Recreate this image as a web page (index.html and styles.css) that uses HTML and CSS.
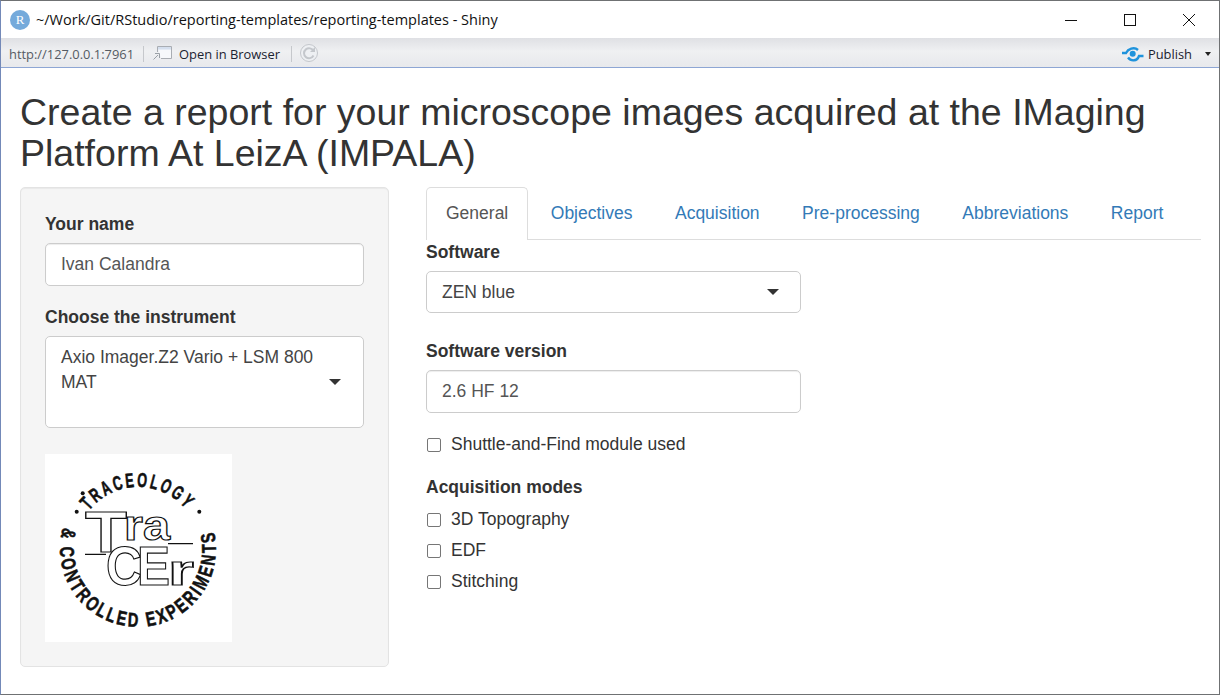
FILE: index.html
```html
<!DOCTYPE html>
<html lang="en">
<head>
<meta charset="utf-8">
<title>Shiny</title>
<link rel="stylesheet" href="styles.css">
</head>
<body>
<div class="window">
  <header class="titlebar">
    <span class="r-icon">R</span>
    <span class="title">~/Work/Git/RStudio/reporting-templates/reporting-templates - Shiny</span>
    <div class="win-controls">
      <svg class="win-btn" width="14" height="14" viewBox="0 0 14 14"><path d="M1 7.5H13" stroke="#111" stroke-width="1" fill="none"/></svg>
      <svg class="win-btn" width="14" height="14" viewBox="0 0 14 14"><rect x="1.5" y="1.5" width="11" height="11" stroke="#111" stroke-width="1" fill="none"/></svg>
      <svg class="win-btn" width="14" height="14" viewBox="0 0 14 14"><path d="M1 1L13 13M13 1L1 13" stroke="#111" stroke-width="1" fill="none"/></svg>
    </div>
  </header>
  <div class="toolbar">
    <span class="url">http://127.0.0.1:7961</span>
    <span class="sep"></span>
    <span class="tool-btn">
      <svg class="open-icon" width="20" height="16" viewBox="0 0 20 16"><path d="M4.500 1.500H18.500V13.500H8" fill="#f6f8fb" stroke="#a9adb3"/><path d="M4.500 1.500V7" stroke="#a9adb3" fill="none"/><path d="M5 2H18V4.500H5Z" fill="#d5dfee"/><path d="M0.500 14.500L5 10M2 8.500H6.500V13" stroke="#9aa0a6" fill="none"/></svg>
      Open in Browser
    </span>
    <span class="sep sep-b"></span>
    <svg class="reload" width="20" height="20" viewBox="0 0 20 20"><circle cx="10" cy="10" r="8.500" fill="#eef0f3" stroke="#c4c7cc"/><path d="M14.500 8A5 5 0 1 0 14.500 12.500" fill="none" stroke="#c4c7cc" stroke-width="2"/><path d="M11 9H16V4Z" fill="#c4c7cc"/></svg>
    <span class="publish">
      <svg width="22" height="16" viewBox="0 0 22 16"><path d="M0 7H4C6 3 12 0.500 16 4" fill="none" stroke="#1f93dc" stroke-width="2.400"/><path d="M6 11.500C9 15.500 15 15.500 17 10H21.500" fill="none" stroke="#1f93dc" stroke-width="2.400"/><circle cx="10.700" cy="7.700" r="3" fill="#1f93dc"/></svg>
      <span class="publish-label">Publish</span>
      <span class="publish-caret"></span>
    </span>
  </div>
  <main class="page">
    <h1 class="page-title">Create a report for your microscope images acquired at the IMaging Platform At LeizA (IMPALA)</h1>
    <div class="layout">
      <aside class="well">
        <div class="field">
          <label class="label">Your name</label>
          <div class="control">Ivan Calandra</div>
        </div>
        <div class="field">
          <label class="label">Choose the instrument</label>
          <div class="control select tall">
            <span class="select-text">Axio Imager.Z2 Vario + LSM 800 MAT</span>
            <span class="caret"></span>
          </div>
        </div>
        <svg class="logo" width="187" height="188" viewBox="0 0 187 188">
          <rect width="187" height="188" fill="#fff"/>
          <defs>
            <path id="arc-top" d="M44.100 56.800A62 62 0 0 1 141.900 56.800"/>
            <path id="arc-bottom" d="M18 73.500A78 78 0 1 0 168 73.500"/>
          </defs>
          <text class="ring"><textPath href="#arc-top" textLength="112" lengthAdjust="spacingAndGlyphs">TRACEOLOGY</textPath></text>
          <text class="ring"><textPath href="#arc-bottom" textLength="286" lengthAdjust="spacingAndGlyphs">&amp; CONTROLLED EXPERIMENTS</textPath></text>
          <circle cx="37.700" cy="39.300" r="2" fill="#111"/>
          <circle cx="31.700" cy="57.700" r="2" fill="#111"/>
          <circle cx="154.300" cy="57.700" r="2" fill="#111"/>
          <path d="M40 100.300H61M123 89.700H148" stroke="#111" stroke-width="1.200"/>
          <text class="mark" x="40" y="98" font-size="58" textLength="42" lengthAdjust="spacingAndGlyphs">T</text>
          <text class="mark" x="79" y="86" font-size="42" textLength="46" lengthAdjust="spacingAndGlyphs">ra</text>
          <text class="mark" x="61" y="131" font-size="56" textLength="36" lengthAdjust="spacingAndGlyphs">C</text>
          <text class="mark" x="92" y="131" font-size="56" textLength="33" lengthAdjust="spacingAndGlyphs">E</text>
          <text class="mark" x="123" y="131" font-size="42" textLength="26" lengthAdjust="spacingAndGlyphs">r</text>
        </svg>
      </aside>
      <section class="content">
        <nav class="tabs">
          <a class="tab active">General</a>
          <a class="tab">Objectives</a>
          <a class="tab">Acquisition</a>
          <a class="tab">Pre-processing</a>
          <a class="tab">Abbreviations</a>
          <a class="tab">Report</a>
        </nav>
        <div class="pane">
          <div class="field wide">
            <label class="label">Software</label>
            <div class="control select short">
              <span class="select-text">ZEN blue</span>
              <span class="caret"></span>
            </div>
          </div>
          <div class="field wide">
            <label class="label">Software version</label>
            <div class="control">2.6 HF 12</div>
          </div>
          <label class="check single"><span class="box"></span>Shuttle-and-Find module used</label>
          <div class="group">
            <div class="label group-label">Acquisition modes</div>
            <label class="check"><span class="box"></span>3D Topography</label>
            <label class="check"><span class="box"></span>EDF</label>
            <label class="check"><span class="box"></span>Stitching</label>
          </div>
        </div>
      </section>
    </div>
  </main>
</div>
</body>
</html>
```
FILE: styles.css
```css
* { box-sizing: border-box; }
html, body { margin: 0; height: 100%; }
body { font-family: "Liberation Sans", Arial, sans-serif; font-size: 17.5px; line-height: 25px; color: #333; background: #fff; }
.window { height: 695px; width: 1220px; display: flex; flex-direction: column; border: 1px solid #6f7173; border-left-color: #7389b8; overflow: hidden; }
.titlebar { height: 37px; flex: none; display: flex; align-items: center; padding-left: 9px; background: #fff; }
.r-icon { width: 20px; height: 20px; border-radius: 50%; background: #75aadb; color: #fff; font: 13px/20px "Liberation Serif", serif; text-align: center; flex: none; }
.title { margin-left: 6px; font-family: "Open Sans", sans-serif; font-size: 14.5px; color: #111; white-space: nowrap; }
.win-controls { margin-left: auto; display: flex; }
.win-btn { margin-left: 45px; }
.win-controls .win-btn:last-child { margin-right: 23px; }
.toolbar { height: 30px; flex: none; display: flex; align-items: center; padding: 3px 0 0 8px; background: linear-gradient(#dfe0e4, #eff0f2 45%, #e8e9ec); border-bottom: 1px solid #8ea6d4; font-family: "Open Sans", sans-serif; font-size: 12.9px; color: #1a2230; }
.url { color: #555b63; }
.sep { width: 1px; height: 16px; background: #c6c8cc; margin: 0 9px; }
.sep-b { margin: 0 7px 0 11px; }
.tool-btn { display: flex; align-items: center; gap: 6px; }
.open-icon { margin-top: -2px; }
.reload { margin-top: -2px; }
.publish { margin-left: auto; display: flex; align-items: center; }
.publish-label { margin-left: 4px; }
.publish-caret { width: 0; height: 0; border: 3.5px solid transparent; border-top: 4px solid #222; border-bottom: 0; margin: 0 8px 0 13px; }
.page { flex: 1; padding: 0 18px 0 19px; min-height: 0; }
.page-title { margin: 24px 0 13px; font-size: 37.5px; line-height: 41px; font-weight: 400; color: #333; }
.layout { display: grid; grid-template-columns: 369px 1fr; column-gap: 37px; align-items: start; }
.well { background: #f5f5f5; border: 1px solid #e3e3e3; border-radius: 5px; padding: 24px; height: 480px; box-shadow: inset 0 1px 1px rgba(0,0,0,.05); }
.field { margin-bottom: 19px; }
.label { display: block; font-weight: 700; margin-bottom: 6px; height: 25px; }
.control { display: flex; align-items: center; height: 43px; padding: 0 21px 0 15px; background: #fff; border: 1px solid #ccc; border-radius: 5px; color: #555; box-shadow: inset 0 1px 1px rgba(0,0,0,.075); }
.select { justify-content: space-between; color: #444; box-shadow: none; }
.short { height: 42px; }
.tall { height: 92px; padding: 8px 22px 8px 15px; }
.tall .select-text { align-self: flex-start; }
.select-text { width: 260px; }
.caret { width: 0; height: 0; flex: none; border: 6.5px solid transparent; border-top: 6.5px solid #333; border-bottom: 0; }
.logo { display: block; margin-top: 26px; }
.ring { font-family: "Liberation Sans", sans-serif; font-weight: 700; font-size: 20px; letter-spacing: 3.5px; fill: #111; stroke: #111; stroke-width: 0.6px; }
.mark { font-family: "Liberation Sans", sans-serif; font-weight: 700; fill: #fff; stroke: #111; stroke-width: 1.2px; }
.tabs { display: flex; height: 53px; border-bottom: 1px solid #ddd; }
.tab { height: 53px; padding: 13px 19px 0; margin-right: 2.5px; color: #337ab7; border: 1px solid transparent; border-bottom: 0; border-radius: 5px 5px 0 0; }
.tab.active { color: #555; background: #fff; border-color: #ddd; }
.wide { width: 375px; }
.pane .field:first-child { margin-bottom: 26px; }
.check { display: flex; align-items: center; height: 25px; margin-bottom: 6px; }
.single { margin-bottom: 18px; }
.box { width: 14px; height: 14px; margin: 0 10px 0 1px; border: 1px solid #767676; border-radius: 2px; background: #fff; }
.group-label { margin-bottom: 7px; }
```
